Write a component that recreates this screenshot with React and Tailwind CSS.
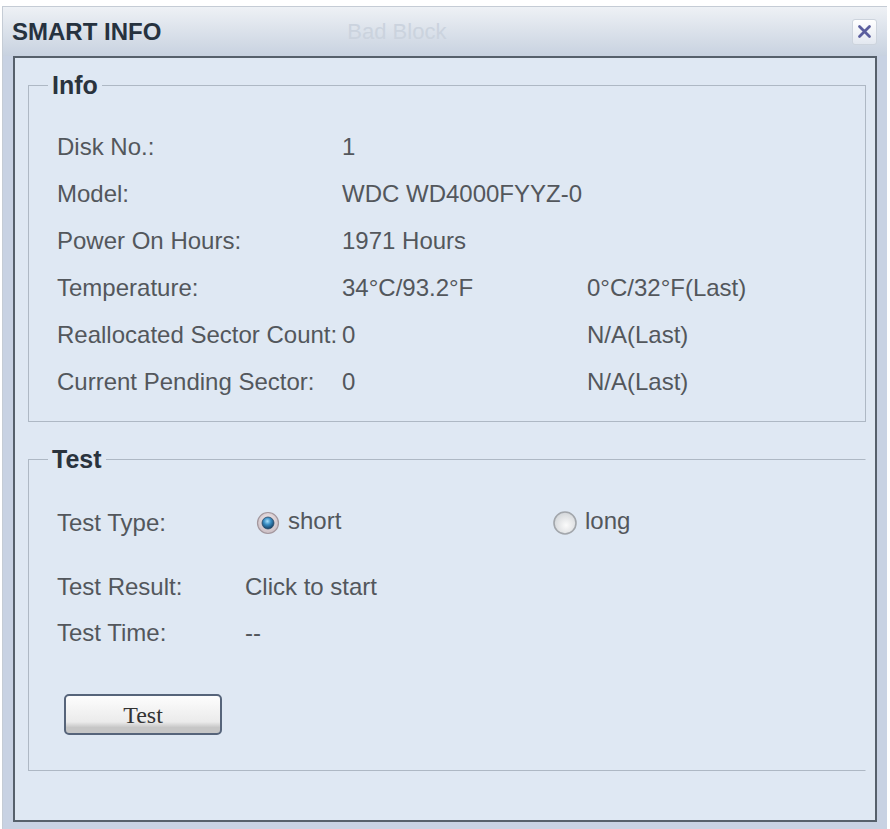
import React from "react";

const infoRows = [
  ["Disk No.:", "1", ""],
  ["Model:", "WDC WD4000FYYZ-0", ""],
  ["Power On Hours:", "1971 Hours", ""],
  ["Temperature:", "34°C/93.2°F", "0°C/32°F(Last)"],
  ["Reallocated Sector Count:", "0", "N/A(Last)"],
  ["Current Pending Sector:", "0", "N/A(Last)"],
];

const RadioOn = () => (
  <svg width="24" height="24" viewBox="0 0 24 24">
    <defs>
      <radialGradient id="ringOn" cx="50%" cy="40%" r="60%">
        <stop offset="0%" stopColor="#f4eef0" />
        <stop offset="100%" stopColor="#c9bcc2" />
      </radialGradient>
      <radialGradient id="dotOn" cx="45%" cy="35%" r="65%">
        <stop offset="0%" stopColor="#a9e0fb" />
        <stop offset="45%" stopColor="#3a8ec4" />
        <stop offset="100%" stopColor="#143e63" />
      </radialGradient>
    </defs>
    <circle cx="12" cy="12" r="10.5" fill="url(#ringOn)" stroke="#a3979d" strokeWidth="1.2" />
    <circle cx="12" cy="12" r="6" fill="url(#dotOn)" stroke="#2b4d6a" strokeWidth="0.8" />
  </svg>
);

const RadioOff = () => (
  <svg width="26" height="26" viewBox="0 0 26 26">
    <defs>
      <radialGradient id="ringOff" cx="55%" cy="60%" r="60%">
        <stop offset="0%" stopColor="#fbfbfb" />
        <stop offset="100%" stopColor="#d3d6d9" />
      </radialGradient>
    </defs>
    <circle cx="13" cy="13" r="11" fill="url(#ringOff)" stroke="#a2a6ab" strokeWidth="1.6" />
  </svg>
);

const Legend = ({ children }) => (
  <legend className="ml-[19px] px-[4px] text-[25px] leading-[24px] font-bold text-[#2a333d]">
    {children}
  </legend>
);

export default function App() {
  return (
    <div className="w-[890px] h-[829px] bg-white pt-[6px] font-['Liberation_Sans',Arial,sans-serif]">
      <div className="ml-[2px] mr-[3px] h-[823px] flex flex-col border-t border-l border-[#c5ccd5] bg-[#c8d2e3]">
        {/* title bar */}
        <div className="h-[49px] flex items-center pl-[9px] pr-[10px] bg-linear-to-b from-[#eef1f5] to-[#c8d2e0]">
          <span className="text-[24px] font-bold text-[#26323f]">SMART INFO</span>
          <span className="ml-[186px] text-[22px] text-[#cbd3de]">Bad Block</span>
          <div className="ml-auto w-[25px] h-[26px] rounded-[3px] border border-[#cdd4dd] bg-linear-to-b from-white to-[#e3e8f0] flex items-center justify-center">
            <svg width="15" height="15" viewBox="0 0 15 15">
              <path d="M2.5 2.5 L12.5 12.5 M12.5 2.5 L2.5 12.5" stroke="#5b5e9e" strokeWidth="2.8" strokeLinecap="round" />
            </svg>
          </div>
        </div>

        {/* content panel */}
        <div className="mx-[10px] h-[766px] border-2 border-[#56606b] bg-[#dfe8f3] pt-[15px] pl-[13px] pr-[9px] text-[24px] text-[#53575c]">
          <fieldset className="border border-[#aeb8c4]">
            <Legend>Info</Legend>
            <div className="pl-[28px] pt-[26px] pb-[16px]">
              {infoRows.map(([label, value, last]) => (
                <div key={label} className="h-[47px] flex items-center">
                  <span className="w-[285px]">{label}</span>
                  <span className="w-[245px]">{value}</span>
                  <span>{last}</span>
                </div>
              ))}
            </div>
          </fieldset>

          <fieldset className="mt-[25px] border border-[#aeb8c4] border-r-transparent">
            <Legend>Test</Legend>
            <div className="pl-[28px] pt-[29px] pb-[35px]">
              <div className="h-[46px] mb-[18px] flex items-center">
                <span className="w-[188px]">Test Type:</span>
                <div className="w-[307px] pl-[11px] flex items-center gap-[8px]">
                  <RadioOn />
                  <span className="-mt-[4px]">short</span>
                </div>
                <div className="flex items-center gap-[7px]">
                  <RadioOff />
                  <span className="-mt-[4px]">long</span>
                </div>
              </div>
              <div className="h-[46px] flex items-center">
                <span className="w-[188px]">Test Result:</span>
                <span>Click to start</span>
              </div>
              <div className="h-[46px] flex items-center">
                <span className="w-[188px]">Test Time:</span>
                <span>--</span>
              </div>
              <button className="mt-[38px] ml-[7px] w-[158px] h-[41px] rounded-[5px] border-2 border-[#56647a] bg-linear-to-b from-[#fdfdfd] from-0% via-[#ebebeb] via-70% to-[#c6c6c6] to-85% font-['Liberation_Serif','Times_New_Roman',serif] text-[24px] text-[#333333]">
                Test
              </button>
            </div>
          </fieldset>
        </div>
      </div>
    </div>
  );
}
